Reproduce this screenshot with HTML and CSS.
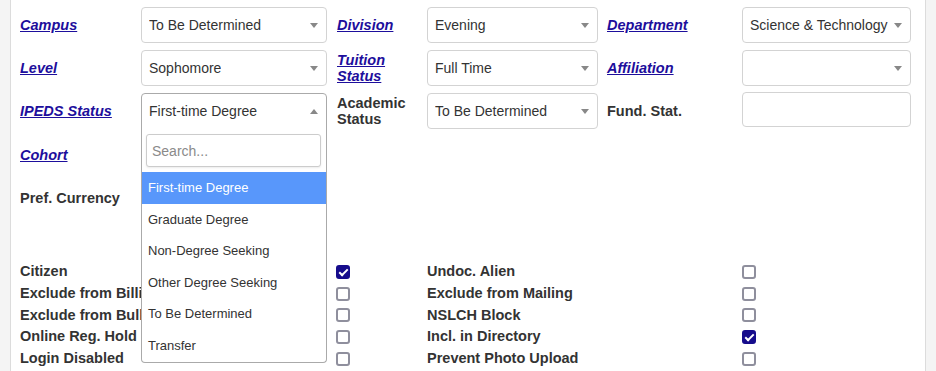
FILE: index.html
```html
<!DOCTYPE html>
<html lang="en">
<head>
    <meta charset="UTF-8">
    <title>Student Details</title>
    <link rel="stylesheet" href="styles.css">
</head>
<body>
    <div class="page">
        <div class="fields">
            <div class="label"><a href="#">Campus</a></div>
            <div class="select"><span>To Be Determined</span><b class="arrow"></b></div>
            <div class="label mid"><a href="#">Division</a></div>
            <div class="select"><span>Evening</span><b class="arrow"></b></div>
            <div class="label last"><a href="#">Department</a></div>
            <div class="select"><span>Science &amp; Technology</span><b class="arrow"></b></div>

            <div class="label"><a href="#">Level</a></div>
            <div class="select"><span>Sophomore</span><b class="arrow"></b></div>
            <div class="label mid"><a href="#">Tuition Status</a></div>
            <div class="select"><span>Full Time</span><b class="arrow"></b></div>
            <div class="label last"><a href="#">Affiliation</a></div>
            <div class="select"><span></span><b class="arrow"></b></div>

            <div class="label"><a href="#">IPEDS Status</a></div>
            <div class="select open">
                <span>First-time Degree</span><b class="arrow"></b>
                <div class="dropdown">
                    <div class="search"><input type="text" placeholder="Search..."></div>
                    <ul class="options">
                        <li class="active">First-time Degree</li>
                        <li>Graduate Degree</li>
                        <li>Non-Degree Seeking</li>
                        <li>Other Degree Seeking</li>
                        <li>To Be Determined</li>
                        <li>Transfer</li>
                    </ul>
                </div>
            </div>
            <div class="label mid">Academic Status</div>
            <div class="select"><span>To Be Determined</span><b class="arrow"></b></div>
            <div class="label last">Fund. Stat.</div>
            <div class="textbox"></div>

            <div class="label low"><a href="#">Cohort</a></div>
            <div class="spacer"></div>

            <div class="label low">Pref. Currency</div>
            <div class="spacer"></div>
        </div>

        <div class="flags">
            <div class="flag"><span>Citizen</span></div>
            <div class="check"><input type="checkbox" checked></div>
            <div class="flag">Undoc. Alien</div>
            <div class="check"><input type="checkbox"></div>

            <div class="flag"><span>Exclude from Billing</span></div>
            <div class="check"><input type="checkbox"></div>
            <div class="flag">Exclude from Mailing</div>
            <div class="check"><input type="checkbox"></div>

            <div class="flag"><span>Exclude from Bulk Email</span></div>
            <div class="check"><input type="checkbox"></div>
            <div class="flag">NSLCH Block</div>
            <div class="check"><input type="checkbox"></div>

            <div class="flag"><span>Online Reg. Hold</span></div>
            <div class="check"><input type="checkbox"></div>
            <div class="flag">Incl. in Directory</div>
            <div class="check"><input type="checkbox" checked></div>

            <div class="flag"><span>Login Disabled</span></div>
            <div class="check"><input type="checkbox"></div>
            <div class="flag">Prevent Photo Upload</div>
            <div class="check"><input type="checkbox"></div>
        </div>
    </div>
</body>
</html>
```

FILE: styles.css
```css
body {
    margin: 0;
    background-color: #f4f4f4;
    font-family: "Liberation Sans", Arial, sans-serif;
    color: #333;
}

.page {
    margin: 0 10px;
    min-height: 371px;
    box-sizing: border-box;
    background-color: white;
    border-left: 1px solid #dcdcdc;
    border-right: 1px solid #dcdcdc;
    padding: 7px 0 0 9px;
}

.fields {
    display: grid;
    grid-template-columns: 121px 186px 100px 171px 144px 169px;
    grid-auto-rows: 36px;
    row-gap: 7px;
}

.label {
    display: flex;
    align-items: center;
    font-size: 14.5px;
    font-weight: bold;
    line-height: 16px;
}

.label.mid {
    padding-left: 10px;
}

.label.last {
    padding-left: 9px;
}

.label.low {
    padding-top: 1px;
}

.label a {
    color: #1d0e9c;
    font-style: italic;
}

.spacer {
    grid-column: span 5;
}

.select {
    position: relative;
    display: flex;
    align-items: center;
    border: 1px solid #d3d3d3;
    border-radius: 4px;
    padding: 0 20px 0 7px;
    font-size: 14px;
    color: #333;
    white-space: nowrap;
}

.select span {
    overflow: hidden;
}

.arrow {
    position: absolute;
    right: 8px;
    top: 50%;
    margin-top: -2px;
    border-style: solid;
    border-width: 5px 4px 0 4px;
    border-color: #888 transparent transparent transparent;
}

.select.open {
    border-color: #aaa;
    border-radius: 4px 4px 0 0;
}

.select.open .arrow {
    border-width: 0 4px 5px 4px;
    border-color: transparent transparent #888 transparent;
}

.textbox {
    border: 1px solid #d3d3d3;
    border-radius: 4px;
    margin-top: -1px;
    height: 35px;
    box-sizing: border-box;
}

.dropdown {
    position: absolute;
    top: 100%;
    left: -1px;
    right: -1px;
    z-index: 10;
    background-color: white;
    border: 1px solid #aaa;
    border-top: none;
    border-radius: 0 0 4px 4px;
}

.search {
    padding: 6px 5px 5px 4px;
}

.search input {
    display: block;
    width: 100%;
    height: 33px;
    box-sizing: border-box;
    border: 1px solid #ccc;
    border-radius: 3px;
    box-shadow: 0 1px 2px rgba(0, 0, 0, 0.08);
    padding: 0 5px;
    font-family: "Liberation Sans", Arial, sans-serif;
    font-size: 14px;
    outline: none;
}

.search input::placeholder {
    color: #8a8a8a;
}

.options {
    list-style: none;
    margin: 0;
    padding: 0;
}

.options li {
    height: 31.6px;
    line-height: 31.6px;
    padding: 0 6px;
    font-size: 13px;
    color: #333;
}

.options li.active {
    background-color: #5897fb;
    color: white;
}

.flags {
    display: grid;
    grid-template-columns: 316px 91px 315px 40px;
    margin-top: 46px;
    font-size: 14.5px;
    font-weight: bold;
    line-height: 21.75px;
}

.flag {
    white-space: nowrap;
}

/* first column is partly covered by the open dropdown */
.flag span {
    display: block;
    width: 121px;
    overflow: hidden;
}

.check {
    display: flex;
    align-items: center;
}

.check input {
    appearance: none;
    position: relative;
    margin: 0;
    width: 14px;
    height: 14px;
    box-sizing: border-box;
    border: 2px solid #8f8f9d;
    border-radius: 3px;
    background-color: white;
}

.check input:checked {
    background-color: #160c8c;
    border-color: #160c8c;
}

.check input:checked::after {
    content: "";
    position: absolute;
    left: 3px;
    top: 0px;
    width: 3px;
    height: 7px;
    border: solid white;
    border-width: 0 2px 2px 0;
    transform: rotate(45deg);
}
```
